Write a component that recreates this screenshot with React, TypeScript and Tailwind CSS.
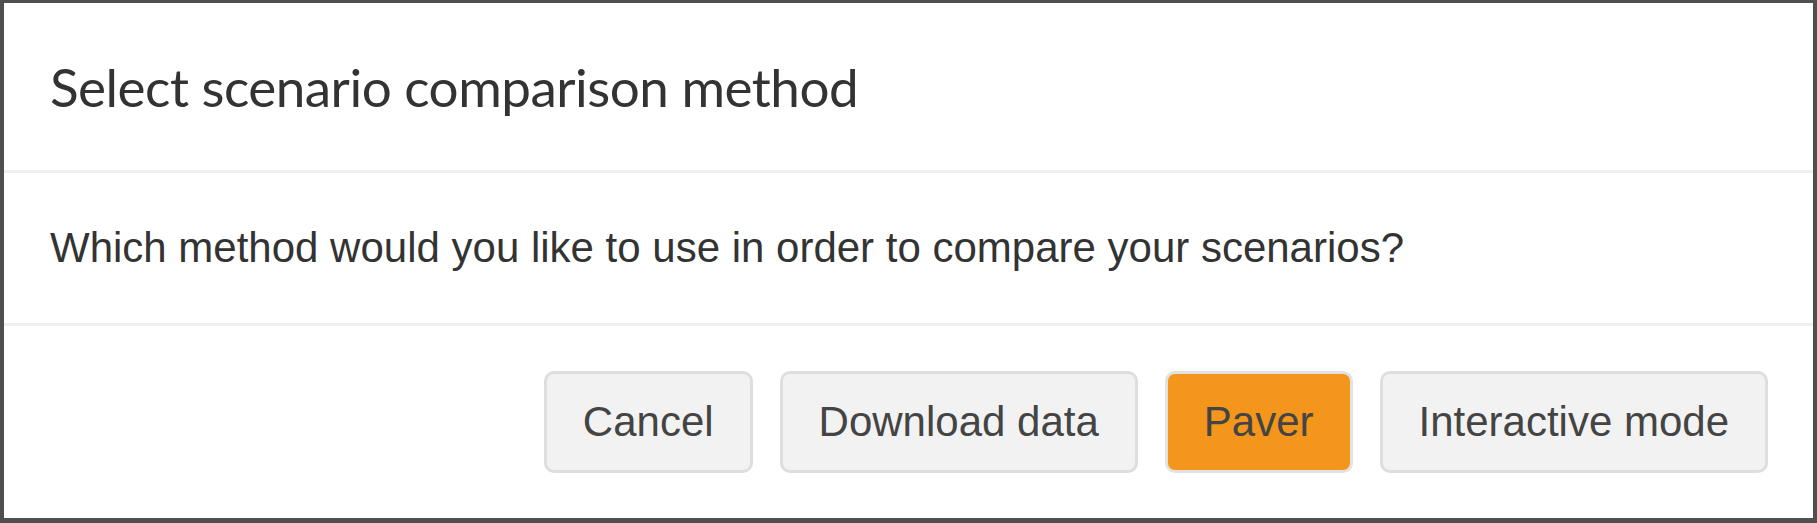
const BUTTONS = [
  { label: "Cancel", primary: false },
  { label: "Download data", primary: false },
  { label: "Paver", primary: true },
  { label: "Interactive mode", primary: false },
];

export default function App() {
  return (
    <div className="w-[1817px] h-[523px] bg-[#4f4f4f] pl-[4px] pr-[4px] pt-[3px] pb-[5px]">
      <div className="h-full bg-white flex flex-col">
        <div className="px-[46px] py-[45px] border-b-[3px] border-[#efefef]">
          <h4 className="font-['Lato',sans-serif] text-[53px] leading-[77px] tracking-[-0.5px] text-[#333]">
            Select scenario comparison method
          </h4>
        </div>
        <div className="px-[46px] py-[45px] border-b-[3px] border-[#efefef]">
          <p className="font-['Liberation_Sans',Arial,sans-serif] text-[42px] leading-[60px] text-[#333]">
            Which method would you like to use in order to compare your scenarios?
          </p>
        </div>
        <div className="flex justify-end gap-[27px] px-[45px] py-[45px]">
          {BUTTONS.map((b) => (
            <button
              key={b.label}
              className={
                "h-[102px] px-[36px] rounded-[10px] border-[3px] font-['Liberation_Sans',Arial,sans-serif] text-[42px] leading-[60px] text-[#444] " +
                (b.primary
                  ? "bg-[#f3961b] border-[#e2e2e2]"
                  : "bg-[#f2f2f2] border-[#dedede]")
              }
            >
              {b.label}
            </button>
          ))}
        </div>
      </div>
    </div>
  );
}
